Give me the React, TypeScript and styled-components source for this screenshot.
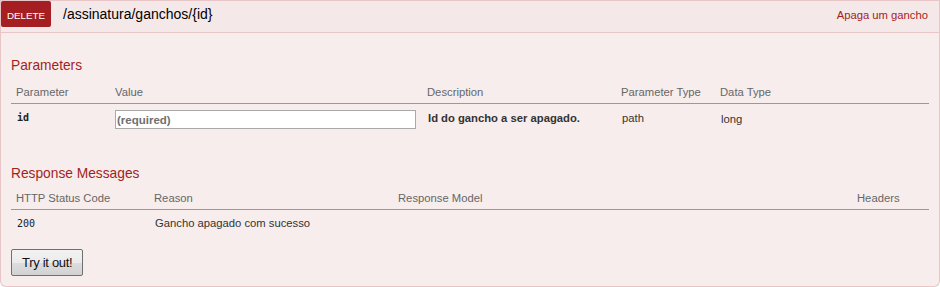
import React from 'react';
import styled, { createGlobalStyle } from 'styled-components';

const GlobalStyle = createGlobalStyle`
  body {
    margin: 0;
    background: #fff;
    font-family: "Liberation Sans", Arial, sans-serif;
    color: #333;
  }
`;

const Operation = styled.div`
  width: 940px;
`;

const Heading = styled.div`
  display: flex;
  align-items: baseline;
  height: 31px;
  background: #f5e8e8;
  border: 1px solid #e8c6c7;
  font-size: 13.75px;
`;

const Method = styled.span`
  display: inline-block;
  width: 50px;
  padding: 7px 0 4px;
  line-height: 15.1px;
  font-size: 9.8px;
  text-align: center;
  text-transform: uppercase;
  color: #fff;
  background: #a41e22;
  border-radius: 2px;
`;

const Path = styled.a`
  margin-left: 12px;
  font-size: 14px;
  line-height: 15.4px;
  color: #000;
  text-decoration: none;
`;

const Summary = styled.a`
  margin-left: auto;
  margin-right: 11px;
  font-size: 11.25px;
  color: #a41e22;
  text-decoration: none;
`;

const Content = styled.div`
  background: #f7eded;
  border: 1px solid #e8c6c7;
  border-top: none;
  border-radius: 0 0 6px 6px;
  padding: 10px;
`;

const SectionTitle = styled.h4<{ $top?: number; $bottom?: number }>`
  margin: ${p => p.$top ?? 0}px 0 0;
  padding: 15px 0 ${p => p.$bottom ?? 5}px;
  font-size: 13.75px;
  line-height: 16px;
  font-weight: normal;
  color: #a41e22;
`;

const Table = styled.table`
  width: 100%;
  table-layout: fixed;
  border-collapse: collapse;
`;

// widths are content widths: the 5px padding on each side comes on top
const Th = styled.th<{ $w?: number }>`
  width: ${p => (p.$w ? `${p.$w - 10}px` : 'auto')};
  padding: 5px;
  font-size: 11.25px;
  line-height: 12px;
  font-weight: normal;
  text-align: left;
  color: #666;
  border-bottom: 1px solid #999;
`;

const Td = styled.td<{ $bold?: boolean; $drop?: number }>`
  padding: ${p => 6 + (p.$drop ?? 0)}px 6px 6px;
  font-size: 11.25px;
  line-height: 14.6px;
  vertical-align: top;
  font-weight: ${p => (p.$bold ? 'bold' : 'normal')};
  color: #333;
`;

const Code = styled.span<{ $bold?: boolean }>`
  font-family: "DejaVu Sans Mono", "Liberation Mono", monospace;
  font-size: 10px;
  font-weight: ${p => (p.$bold ? 'bold' : 'normal')};
  color: #222;
`;

const ValueInput = styled.input`
  display: block;
  box-sizing: border-box;
  width: 301px;
  height: 19px;
  margin: 0 0 0 -1px;
  padding: 0 1px;
  border: 1px solid #a9a9a9;
  background: #fff;
  font-family: "Liberation Sans", Arial, sans-serif;
  font-size: 11.5px;
  font-weight: bold;
  color: #333;

  &::placeholder {
    color: #6f6f6f;
    opacity: 1;
  }
`;

const SubmitButton = styled.button`
  display: block;
  box-sizing: border-box;
  height: 27px;
  margin-top: 11px;
  padding: 0 10px;
  border: 1px solid #707070;
  border-radius: 2px;
  background: linear-gradient(to bottom, #f2f2f2 0%, #ebebeb 50%, #dddddd 51%, #d2d2d2 100%);
  font-family: "Liberation Sans", Arial, sans-serif;
  font-size: 13px;
  letter-spacing: -0.3px;
  color: #111;
  cursor: pointer;
`;

const params = [
  { name: 'id', description: 'Id do gancho a ser apagado.', paramType: 'path', dataType: 'long' },
];

const responses = [{ code: '200', reason: 'Gancho apagado com sucesso', model: '', headers: '' }];

const App: React.FC = () => {
  return (
    <>
      <GlobalStyle />
      <Operation>
        <Heading>
          <Method>delete</Method>
          <Path href="#">/assinatura/ganchos/{'{id}'}</Path>
          <Summary href="#">Apaga um gancho</Summary>
        </Heading>
        <Content>
          <SectionTitle $bottom={7}>Parameters</SectionTitle>
          <Table>
            <thead>
              <tr>
                <Th $w={99}>Parameter</Th>
                <Th $w={312}>Value</Th>
                <Th $w={194}>Description</Th>
                <Th $w={99}>Parameter Type</Th>
                <Th>Data Type</Th>
              </tr>
            </thead>
            <tbody>
              {params.map(p => (
                <tr key={p.name}>
                  <Td><Code $bold>{p.name}</Code></Td>
                  <Td><ValueInput type="text" placeholder="(required)" /></Td>
                  <Td $bold $drop={1}>{p.description}</Td>
                  <Td $drop={1}>{p.paramType}</Td>
                  <Td $drop={2}>{p.dataType}</Td>
                </tr>
              ))}
            </tbody>
          </Table>
          <SectionTitle $top={16}>Response Messages</SectionTitle>
          <Table>
            <thead>
              <tr>
                <Th $w={138}>HTTP Status Code</Th>
                <Th $w={244}>Reason</Th>
                <Th $w={459}>Response Model</Th>
                <Th>Headers</Th>
              </tr>
            </thead>
            <tbody>
              {responses.map(r => (
                <tr key={r.code}>
                  <Td><Code>{r.code}</Code></Td>
                  <Td>{r.reason}</Td>
                  <Td>{r.model}</Td>
                  <Td>{r.headers}</Td>
                </tr>
              ))}
            </tbody>
          </Table>
          <SubmitButton type="button">Try it out!</SubmitButton>
        </Content>
      </Operation>
    </>
  );
};

export default App;
